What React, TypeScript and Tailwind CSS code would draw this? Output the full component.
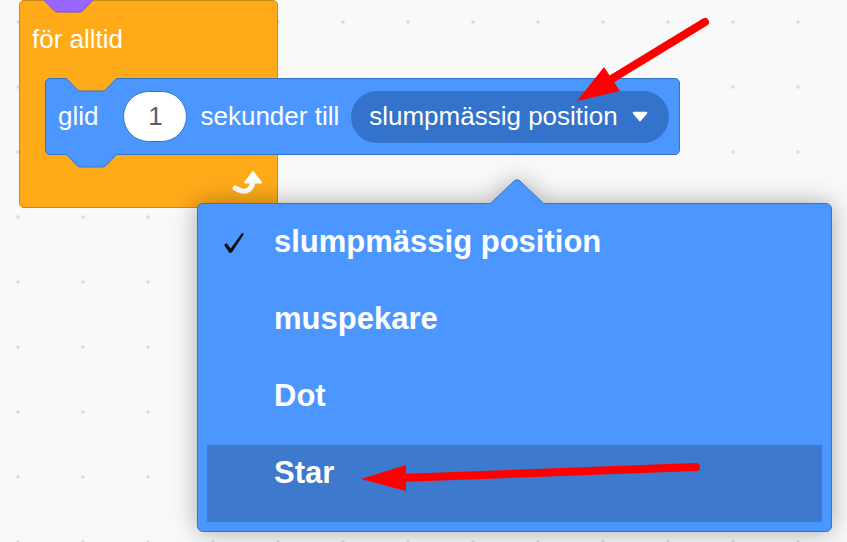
import React from "react";

// shape of a Scratch block notch / tab (51 x 14)
const NOTCH = "M0.5 0.5 L11 11.5 Q12.5 13 14.5 13 L36.5 13 Q38.5 13 40 11.5 L50.5 0.5";

function Notch({ fill, stroke, className }: { fill: string; stroke: string; className: string }) {
    return (
        <svg className={className} width="51" height="14" viewBox="0 0 51 14">
            <path d={NOTCH + " L50.5 0 L0.5 0 Z"} fill={fill} />
            <path d={NOTCH} fill="none" stroke={stroke} strokeWidth="1" />
        </svg>
    );
}

function Caret() {
    return (
        <svg width="16" height="11" viewBox="0 0 16 11">
            <path d="M2 2 L14 2 L8 9 Z" fill="#fff" stroke="#fff" strokeWidth="2.5" strokeLinejoin="round" />
        </svg>
    );
}

function LoopArrow() {
    return (
        <svg width="31" height="25" viewBox="0 0 31 25">
            <path d="M3 19 Q12 24.5 17 20.5 Q20.5 17.5 21 12" fill="none" stroke="#fff" strokeWidth="5" strokeLinecap="round" />
            <path d="M13 13.5 L21 3 L29 13.5 Z" fill="#fff" stroke="#fff" strokeWidth="2" strokeLinejoin="round" />
        </svg>
    );
}

function Check() {
    return (
        <svg width="22" height="22" viewBox="0 0 22 22">
            <path d="M1 12.8 L3.6 11 L7.6 16.6 L19.2 0.8 L21 1.9 L8.9 20.6 L6.3 20.9 Z" fill="#111" />
        </svg>
    );
}

function GlideBlock() {
    return (
        <div className="relative flex items-center w-[635px] h-[77px] shrink-0 pl-[12px] bg-[#4C97FF] border border-[#3373CC] rounded-[5px] text-white">
            <Notch fill="#FFAB19" stroke="#3373CC" className="absolute left-[20px] top-[-1px]" />
            <Notch fill="#4C97FF" stroke="#3373CC" className="absolute left-[20px] top-full" />
            <span>glid</span>
            <div className="ml-[25px] flex items-center justify-center w-[64px] h-[51px] rounded-full bg-white border border-[#3373CC] text-[#575E75]">
                1
            </div>
            <span className="ml-[13px]">sekunder till</span>
            <div className="ml-[12px] flex items-center gap-[14px] h-[52px] pl-[18px] pr-[21px] rounded-full bg-[#3373CC]">
                <span>slumpmässig position</span>
                <Caret />
            </div>
        </div>
    );
}

function ForeverBlock() {
    return (
        <div className="absolute left-[19px] top-0 w-[259px] h-[208px] flex flex-col bg-[#FFAB19] border border-[#CF8B17] rounded-[5px] text-[26px] text-white">
            <div className="h-[77px] flex items-center pl-[12px]">för alltid</div>
            <div className="pl-[25px]">
                <GlideBlock />
            </div>
            <div className="flex-1 flex justify-end items-start pt-[14px] pr-[14px]">
                <LoopArrow />
            </div>
            <Notch fill="#9966FF" stroke="#774DCB" className="absolute left-[23px] top-[-2px]" />
        </div>
    );
}

const items = ["slumpmässig position", "muspekare", "Dot", "Star"];

function Menu() {
    return (
        <div className="absolute left-[197px] top-[203px] w-[635px] h-[329px] drop-shadow-[0_0_12px_rgba(0,0,0,0.32)]">
            <div className="relative w-full h-full px-[9px] pt-[10px] bg-[#4C97FF] border border-[#3373CC] rounded-[6px]">
                <svg className="absolute left-[291px] top-[-26px]" width="57" height="27" viewBox="0 0 57 27">
                    <path d="M1 27 L1 26 L25 3 Q28 0.5 31 3 L55 26 L55 27 Z" fill="#4C97FF" />
                    <path d="M1 26 L25 3 Q28 0.5 31 3 L55 26" fill="none" stroke="#3373CC" strokeWidth="1" />
                </svg>
                {items.map((t, i) => (
                    <div
                        key={t}
                        className={`flex h-[77px] pl-[16px] pt-[10px] text-[31px] leading-[36px] font-bold text-white ${i === 3 ? "bg-[#3D79CC]" : ""}`}
                    >
                        <div className="w-[51px] pt-[8px]">{i === 0 && <Check />}</div>
                        <span>{t}</span>
                    </div>
                ))}
            </div>
        </div>
    );
}

function Arrows() {
    return (
        <svg className="absolute inset-0 pointer-events-none" width="847" height="542" viewBox="0 0 847 542">
            <line x1="705" y1="22" x2="610" y2="80" stroke="#FF0000" strokeWidth="8" strokeLinecap="round" />
            <path d="M577 101 L604 67 L620 91 Z" fill="#FF0000" />
            <line x1="696" y1="467" x2="400" y2="478" stroke="#FF0000" strokeWidth="8" strokeLinecap="round" />
            <path d="M361 479 L406 465 L406 491 Z" fill="#FF0000" />
        </svg>
    );
}

export default function App() {
    return (
        <div className="relative w-[847px] h-[542px] overflow-hidden bg-[#F9F9F9] bg-[radial-gradient(circle,#d6d6d6_1.3px,transparent_1.8px)] bg-size-[65px_65px] bg-position-[-14.5px_-10.5px] font-['Liberation_Sans',Arial,sans-serif]">
            <ForeverBlock />
            <Menu />
            <Arrows />
        </div>
    );
}
